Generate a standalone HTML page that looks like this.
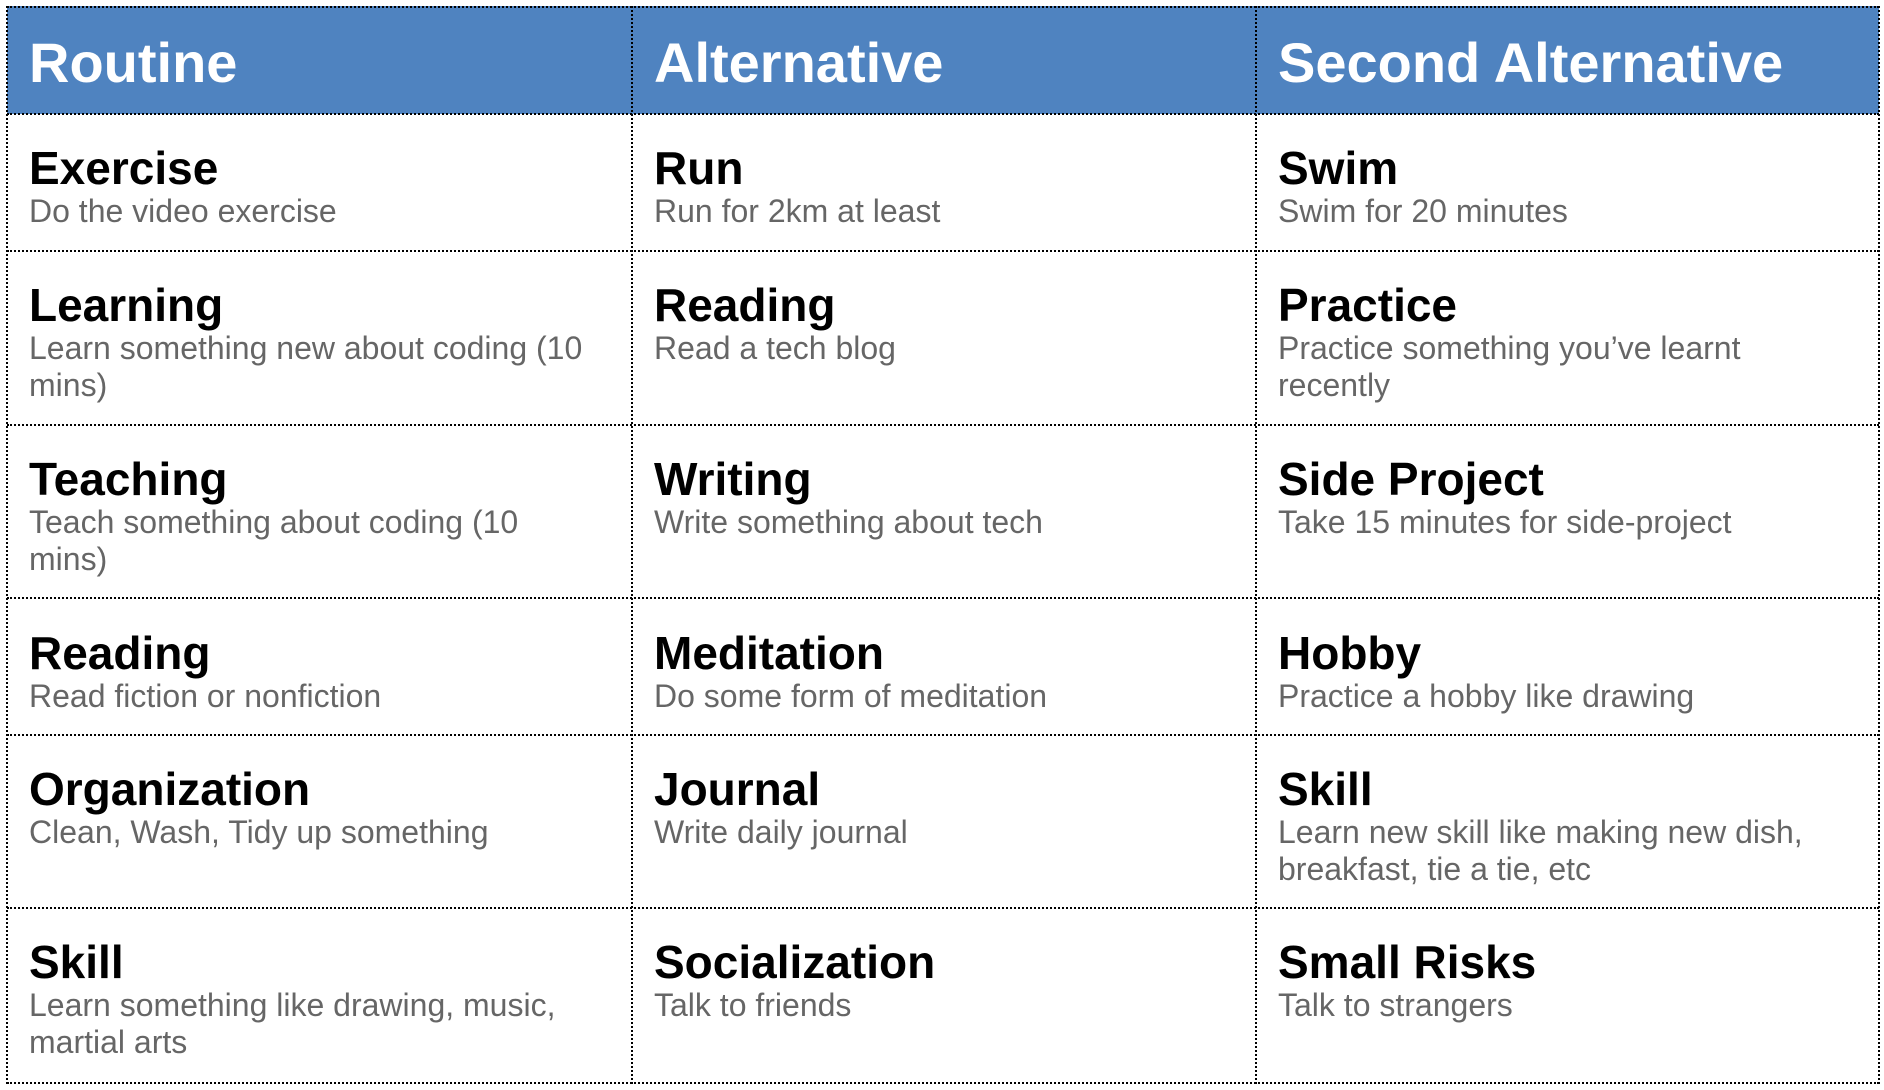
<!DOCTYPE html>
<html><head><meta charset="utf-8"><style>
html,body{margin:0;padding:0;background:#fff;width:1884px;height:1090px;overflow:hidden}
body{position:relative;font-family:"Liberation Sans","DejaVu Sans",sans-serif}
.hdr{position:absolute;left:7px;top:6px;width:1872px;height:108px;background:#4f83c0}
.h{position:absolute;top:6px;height:108px;line-height:114px;color:#fff;font-weight:bold;font-size:56px;padding-left:22px;white-space:nowrap}
.hl{position:absolute;border-top:2px dotted #000;left:7px;width:1872px;height:0}
.vl{position:absolute;border-left:2px dotted #000;top:6px;height:1078px;width:0}
.c{position:absolute;padding-left:22px;white-space:nowrap}
.t{font-weight:bold;font-size:46px;line-height:50px;color:#000}
.d{font-size:32px;line-height:37px;color:#666}
</style></head><body>
<div class="hdr"></div>
<div class="h" style="left:7px">Routine</div>
<div class="h" style="left:632px">Alternative</div>
<div class="h" style="left:1256px">Second Alternative</div>

<div class="hl" style="top:6px"></div>
<div class="hl" style="top:113px"></div>
<div class="hl" style="top:250px"></div>
<div class="hl" style="top:424px"></div>
<div class="hl" style="top:597px"></div>
<div class="hl" style="top:734px"></div>
<div class="hl" style="top:907px"></div>
<div class="hl" style="top:1082px"></div>
<div class="vl" style="left:6px"></div>
<div class="vl" style="left:631px"></div>
<div class="vl" style="left:1255px"></div>
<div class="vl" style="left:1878px"></div>

<div class="c" style="left:7px;top:143px"><div class="t">Exercise</div><div class="d">Do the video exercise</div></div>
<div class="c" style="left:632px;top:143px"><div class="t">Run</div><div class="d">Run for 2km at least</div></div>
<div class="c" style="left:1256px;top:143px"><div class="t">Swim</div><div class="d">Swim for 20 minutes</div></div>

<div class="c" style="left:7px;top:280px"><div class="t">Learning</div><div class="d">Learn something new about coding (10<br>mins)</div></div>
<div class="c" style="left:632px;top:280px"><div class="t">Reading</div><div class="d">Read a tech blog</div></div>
<div class="c" style="left:1256px;top:280px"><div class="t">Practice</div><div class="d">Practice something you’ve learnt<br>recently</div></div>

<div class="c" style="left:7px;top:454px"><div class="t">Teaching</div><div class="d">Teach something about coding (10<br>mins)</div></div>
<div class="c" style="left:632px;top:454px"><div class="t">Writing</div><div class="d">Write something about tech</div></div>
<div class="c" style="left:1256px;top:454px"><div class="t">Side Project</div><div class="d">Take 15 minutes for side-project</div></div>

<div class="c" style="left:7px;top:628px"><div class="t">Reading</div><div class="d">Read fiction or nonfiction</div></div>
<div class="c" style="left:632px;top:628px"><div class="t">Meditation</div><div class="d">Do some form of meditation</div></div>
<div class="c" style="left:1256px;top:628px"><div class="t">Hobby</div><div class="d">Practice a hobby like drawing</div></div>

<div class="c" style="left:7px;top:764px"><div class="t">Organization</div><div class="d">Clean, Wash, Tidy up something</div></div>
<div class="c" style="left:632px;top:764px"><div class="t">Journal</div><div class="d">Write daily journal</div></div>
<div class="c" style="left:1256px;top:764px"><div class="t">Skill</div><div class="d">Learn new skill like making new dish,<br>breakfast, tie a tie, etc</div></div>

<div class="c" style="left:7px;top:937px"><div class="t">Skill</div><div class="d">Learn something like drawing, music,<br>martial arts</div></div>
<div class="c" style="left:632px;top:937px"><div class="t">Socialization</div><div class="d">Talk to friends</div></div>
<div class="c" style="left:1256px;top:937px"><div class="t">Small Risks</div><div class="d">Talk to strangers</div></div>
</body></html>
